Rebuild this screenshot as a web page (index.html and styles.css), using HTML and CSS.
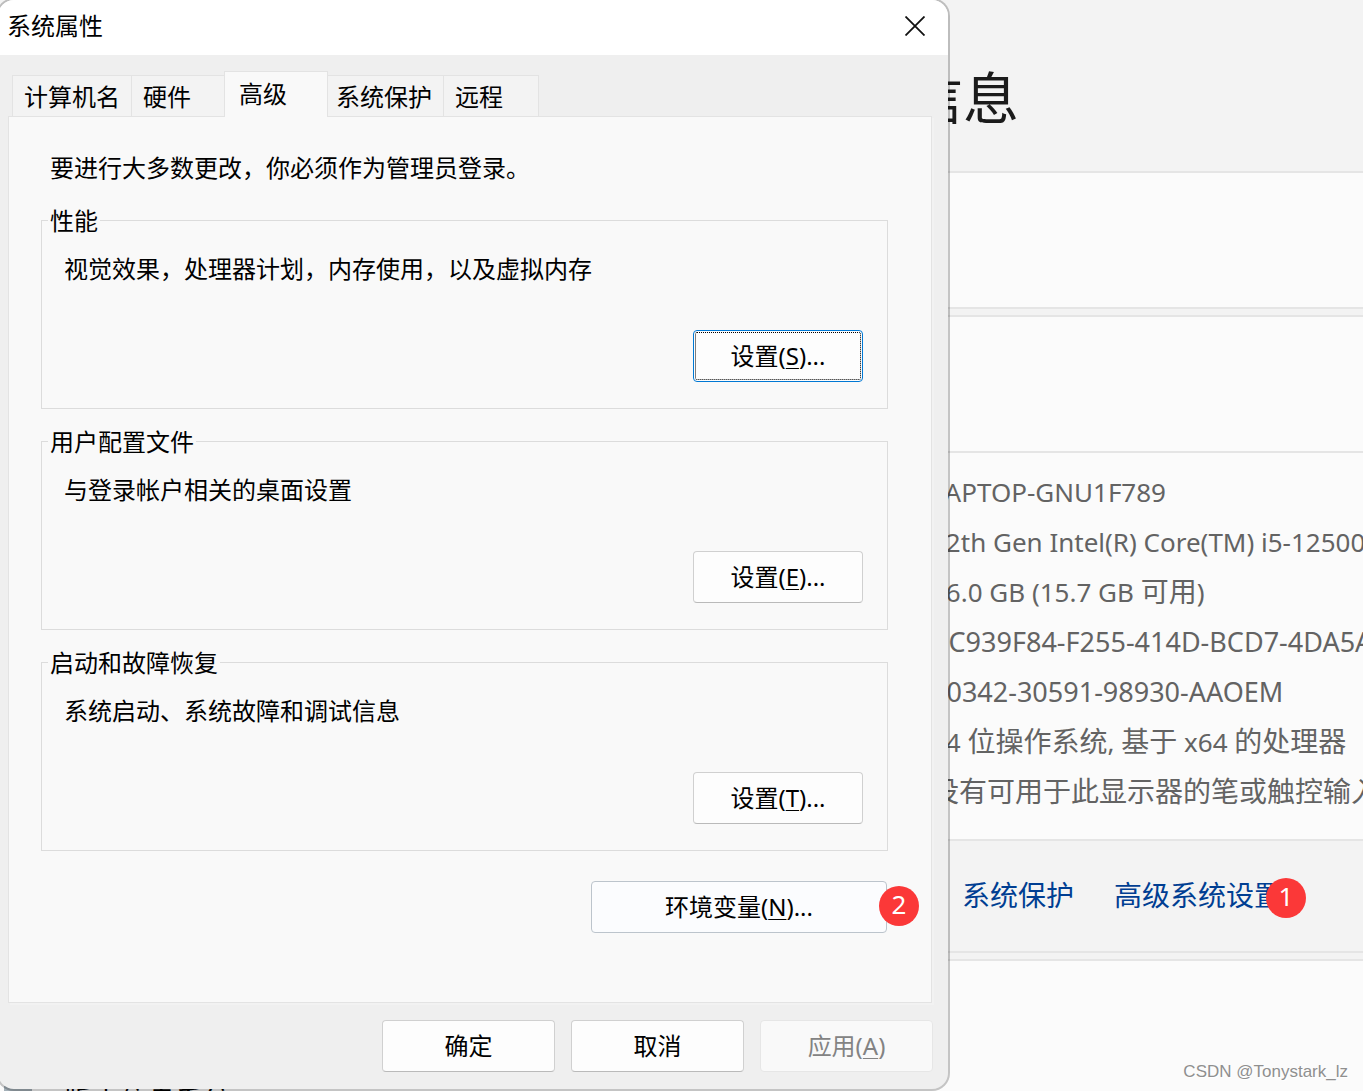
FILE: index.html
```html
<!DOCTYPE html>
<html lang="zh-CN">
<head>
<meta charset="utf-8">
<title>系统属性</title>
<link rel="stylesheet" href="styles.css">
</head>
<body>
<main class="settings">
  <header class="settings-header">
    <h1>系统信息</h1>
  </header>

  <section class="card card-device"></section>

  <section class="card">
    <div class="card-head"></div>
    <ul class="specs">
      <li><span class="latin">LAPTOP-GNU1F789</span></li>
      <li><span class="latin">12th Gen Intel(R) Core(TM) i5-12500H</span></li>
      <li><span class="latin">16.0 GB (15.7 GB </span>可用<span class="latin">)</span></li>
      <li><span class="latin latin-id">BC939F84-F255-414D-BCD7-4DA5A</span></li>
      <li><span class="latin latin-id">00342-30591-98930-AAOEM</span></li>
      <li><span class="latin">64 </span>位操作系统<span class="latin">, </span>基于<span class="latin"> x64 </span>的处理器</li>
      <li>没有可用于此显示器的笔或触控输入</li>
    </ul>
    <nav class="related">
      <a href="#protection">系统保护</a>
      <a href="#advanced">高级系统设置<span class="badge badge-link">1</span></a>
    </nav>
  </section>

  <section class="card card-windows">
    <span class="windows-icon"></span>
    <h2>版本信息系统</h2>
  </section>
</main>

<div class="dialog" role="dialog" aria-labelledby="dialog-title">
  <div class="titlebar">
    <span id="dialog-title">系统属性</span>
    <button class="close" type="button" aria-label="关闭">
      <svg width="20" height="20" viewBox="0 0 20 20"><path d="M0.5 0.5 19.5 19.5M19.5 0.5 0.5 19.5" fill="none" stroke="#111" stroke-width="1.8"/></svg>
    </button>
  </div>

  <div class="dialog-body">
    <div class="tabs" role="tablist">
      <button class="tab" type="button" role="tab">计算机名</button>
      <button class="tab" type="button" role="tab">硬件</button>
      <button class="tab tab-selected" type="button" role="tab" aria-selected="true">高级</button>
      <button class="tab" type="button" role="tab">系统保护</button>
      <button class="tab" type="button" role="tab">远程</button>
    </div>

    <div class="panel" role="tabpanel">
      <p class="intro">要进行大多数更改，你必须作为管理员登录。</p>

      <fieldset class="group">
        <legend>性能</legend>
        <p>视觉效果，处理器计划，内存使用，以及虚拟内存</p>
        <button class="btn btn-focused" type="button">设置(<u>S</u>)...</button>
      </fieldset>

      <fieldset class="group">
        <legend>用户配置文件</legend>
        <p>与登录帐户相关的桌面设置</p>
        <button class="btn" type="button">设置(<u>E</u>)...</button>
      </fieldset>

      <fieldset class="group">
        <legend>启动和故障恢复</legend>
        <p>系统启动、系统故障和调试信息</p>
        <button class="btn" type="button">设置(<u>T</u>)...</button>
      </fieldset>

      <div class="env">
        <button class="btn btn-env" type="button">环境变量(<u>N</u>)...</button>
        <span class="badge badge-env">2</span>
      </div>
    </div>

    <div class="actions">
      <button class="btn" type="button">确定</button>
      <button class="btn" type="button">取消</button>
      <button class="btn" type="button" disabled>应用(<u>A</u>)</button>
    </div>
  </div>
</div>

<div class="watermark">CSDN @Tonystark_lz</div>
</body>
</html>
```
FILE: styles.css
```css
* {
  box-sizing: border-box;
}

body {
  position: relative;
  height: 100vh;
  margin: 0;
  overflow: hidden;
  background: #f3f3f3;
  color: #000;
  font-family: "Noto Sans", "Noto Sans CJK SC", sans-serif;
  font-size: 24px;
  line-height: 32px;
}

h1, h2, p, ul {
  margin: 0;
  padding: 0;
}

button {
  padding: 0;
  color: inherit;
  font: inherit;
}

/* Settings page behind the dialog */

.settings {
  display: flex;
  flex-direction: column;
  gap: 6px;
  height: 100%;
  overflow: hidden;
}

.settings > * {
  flex-shrink: 0;
}

.settings-header {
  height: 165px;
  padding: 57px 0 0 795px;
}

.settings-header h1 {
  color: #1b1b1b;
  font-size: 56px;
  font-weight: 400;
  line-height: 80px;
}

.card {
  border: solid #e5e5e5;
  border-width: 2px 0;
  background: #fbfbfb;
}

.card-device {
  height: 138px;
}

.card-head {
  height: 134px;
}

.specs {
  padding: 13px 0 23px 931px;
  border: solid #e5e5e5;
  border-width: 2px 0;
  color: #636363;
  font-size: 28px;
  line-height: 50px;
  list-style: none;
  white-space: nowrap;
}

.specs li {
  height: 50px;
}

.latin {
  font-size: 26px;
  white-space: pre;
}

.latin-id {
  font-size: 27px;
}

.related {
  display: flex;
  align-items: center;
  gap: 40px;
  height: 110px;
  padding: 0 0 3px 962px;
  background: #f3f3f3;
  font-size: 28px;
}

.related a {
  position: relative;
  color: #003e92;
  text-decoration: none;
  white-space: nowrap;
}

.card-windows {
  display: flex;
  align-items: center;
  gap: 32px;
  height: 282px;
  padding-left: 4px;
}

.windows-icon {
  width: 28px;
  height: 28px;
  background: #a4b0b8;
}

.card-windows h2 {
  font-size: 28px;
  font-weight: 400;
}

/* Numbered step markers */

.badge {
  position: absolute;
  width: 40px;
  height: 40px;
  border-radius: 50%;
  background: #fb3838;
  color: #fff;
  font-size: 26px;
  line-height: 37px;
  text-align: center;
}

.badge-link {
  top: -1px;
  right: -24px;
}

.badge-env {
  top: 5px;
  right: -32px;
}

/* Dialog window */

.dialog {
  position: absolute;
  top: -2px;
  left: -4px;
  width: 954px;
  border: 2px solid rgba(0, 0, 0, 0.22);
  border-radius: 18px;
  background: #efefef;
  background-clip: padding-box;
  overflow: hidden;
}

.titlebar {
  display: flex;
  align-items: center;
  justify-content: space-between;
  height: 55px;
  padding: 0 13px 3px 9px;
  background: #fff;
}

.close {
  display: grid;
  place-items: center;
  width: 40px;
  height: 40px;
  border: 0;
  background: none;
}

.dialog-body {
  padding: 16px 15px 17px 10px;
}

.tabs {
  display: flex;
  align-items: flex-end;
  height: 46px;
  margin-bottom: -1px;
  padding-left: 4px;
}

.tab {
  position: relative;
  width: 96px;
  height: 42px;
  padding: 2px 0 0 11px;
  border: 1px solid #e3e3e3;
  border-right: 0;
  background: #f3f3f3;
  text-align: left;
}

.tab:first-child,
.tab:nth-child(4) {
  width: 119px;
}

.tab:last-child {
  border-right: 1px solid #e3e3e3;
}

.tab-selected {
  z-index: 1;
  width: 104px;
  height: 46px;
  margin: 0 -4px 0 -3px;
  padding: 0 0 1px 14px;
  border-right: 1px solid #e3e3e3;
  border-bottom: 0;
  background: #f9f9f9;
}

.panel {
  margin-right: 1px;
  padding: 35px 43px 69px 32px;
  border: 1px solid #e3e3e3;
  background: #f9f9f9;
  box-shadow: 2px 2px 0 #f2f2f2;
}

.intro {
  margin: 0 0 21px 9px;
}

.group {
  min-width: 0;
  margin: 0 0 17px;
  padding: 17px 24px 26px 6px;
  border: 1px solid #dcdcdc;
}

.group legend {
  padding: 0 2px;
  line-height: 31px;
}

.group p {
  margin: 0 0 45px 16px;
}

.btn {
  display: block;
  width: 173px;
  height: 52px;
  border: 1px solid #d0d0d0;
  border-bottom-color: #bababa;
  border-radius: 4px;
  background: #fdfdfd;
}

.btn u {
  text-decoration-thickness: 1px;
  text-underline-offset: 3px;
}

.group .btn {
  width: 170px;
  margin-left: auto;
}

.btn-focused {
  border-color: #0078d4;
  outline: 1px dotted #000;
  outline-offset: -3px;
}

.env {
  position: relative;
  width: 296px;
  margin: 30px 1px 0 auto;
}

.btn-env {
  width: 100%;
  border-color: #bcc4cc;
  background: #fbfcfe;
}

.btn:disabled {
  border-color: #e6e6e6;
  background: #f9f9f9;
  color: #838383;
}

.actions {
  display: flex;
  justify-content: flex-end;
  gap: 16px;
  margin-top: 17px;
}

.watermark {
  position: absolute;
  right: 15px;
  bottom: 3px;
  color: #8f8f8f;
  font-family: "Liberation Sans", sans-serif;
  font-size: 17px;
  text-shadow: 1px 1px 0 #fff;
}
```
